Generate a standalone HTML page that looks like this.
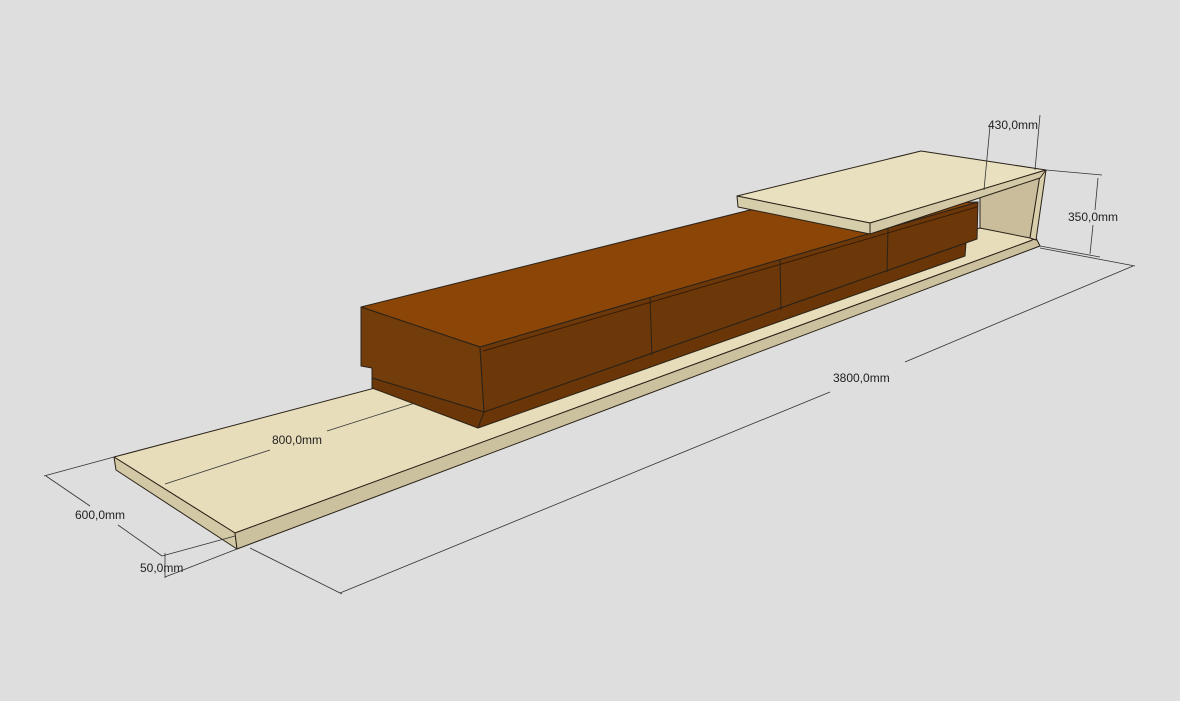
<!DOCTYPE html>
<html><head><meta charset="utf-8"><style>
html,body{margin:0;padding:0;background:#dfdfdf;}
svg{display:block}
text{font-family:"Liberation Sans",sans-serif;font-size:12px;fill:#222}
</style></head><body>
<svg width="1180" height="701" viewBox="0 0 1180 701" xmlns="http://www.w3.org/2000/svg">
<rect width="1180" height="701" fill="#dedede"/>
<g stroke="#2a2218" stroke-width="1" stroke-linejoin="round">
<!-- base slab -->
<polygon points="114,457 980,228 1036,238 1030,241 235,533" fill="#e8ddba"/>
<polygon points="114,457 235,533 237,549 116,470" fill="#d2c8a5"/>
<polygon points="235,533 1030,241 1036,238 1040,246 237,549" fill="#cbc19f"/>
<!-- vertical panel -->
<polygon points="980,196 1040,176 1030,238 980,228" fill="#c9bd9c"/>
<polygon points="1040,175 1046,170 1036,240 1030,238" fill="#d8ceac"/>
<!-- cabinet -->
<polygon points="361,307 750,210 978,202 480,347" fill="#8b4507"/>
<polygon points="361,307 480,347 484,412 372,378 372,368 361,366" fill="#723c0b"/>
<polygon points="372,378 484,412 478,428 372,388" fill="#6b3608"/>
<polygon points="484,412 966,243 965,256 478,428" fill="#6a3607"/>
<polygon points="480,347 978,202 977,239 484,412" fill="#6c380a"/>
<line x1="483" y1="351" x2="977" y2="207" stroke="#3a1c04"/>
<line x1="650" y1="298" x2="652" y2="355"/>
<line x1="780" y1="260" x2="781" y2="310"/>
<line x1="888" y1="229" x2="887" y2="272"/>
<!-- top shelf -->
<polygon points="737,196 921,151 1046,170 870,223" fill="#e9e0bf"/>
<polygon points="737,196 870,223 870,234 738,207" fill="#d6cdaa"/>
<polygon points="870,223 1046,170 1040,178 870,234" fill="#d3c9a7"/>
</g>
<!-- dimensions -->
<g stroke="#333" stroke-width="0.8" fill="none">
<line x1="250" y1="548" x2="342" y2="594"/>
<line x1="1040" y1="248" x2="1135" y2="266"/>
<line x1="340" y1="593" x2="830" y2="392"/>
<line x1="905" y1="362" x2="1133" y2="266"/>
<line x1="114" y1="457" x2="44" y2="476"/>
<line x1="46" y1="476" x2="90" y2="506"/>
<line x1="118" y1="525" x2="162" y2="556"/>
<line x1="235" y1="536" x2="162" y2="556"/>
<line x1="237" y1="549" x2="165" y2="577"/>
<line x1="165" y1="553" x2="165" y2="578"/>
<line x1="165" y1="484" x2="270" y2="450"/>
<line x1="327" y1="431" x2="415" y2="403"/>
<line x1="1046" y1="170" x2="1102" y2="175"/>
<line x1="1040" y1="246" x2="1100" y2="257"/>
<line x1="1098" y1="178" x2="1095" y2="210"/>
<line x1="1093" y1="225" x2="1090" y2="254"/>
<line x1="984" y1="190" x2="990" y2="126"/>
<line x1="1035" y1="170" x2="1040" y2="115"/>
</g>
<text x="833" y="382">3800,0mm</text>
<text x="75" y="519">600,0mm</text>
<text x="272" y="444">800,0mm</text>
<text x="140" y="572">50,0mm</text>
<text x="1068" y="221">350,0mm</text>
<text x="988" y="129">430,0mm</text>
</svg>
</body></html>
